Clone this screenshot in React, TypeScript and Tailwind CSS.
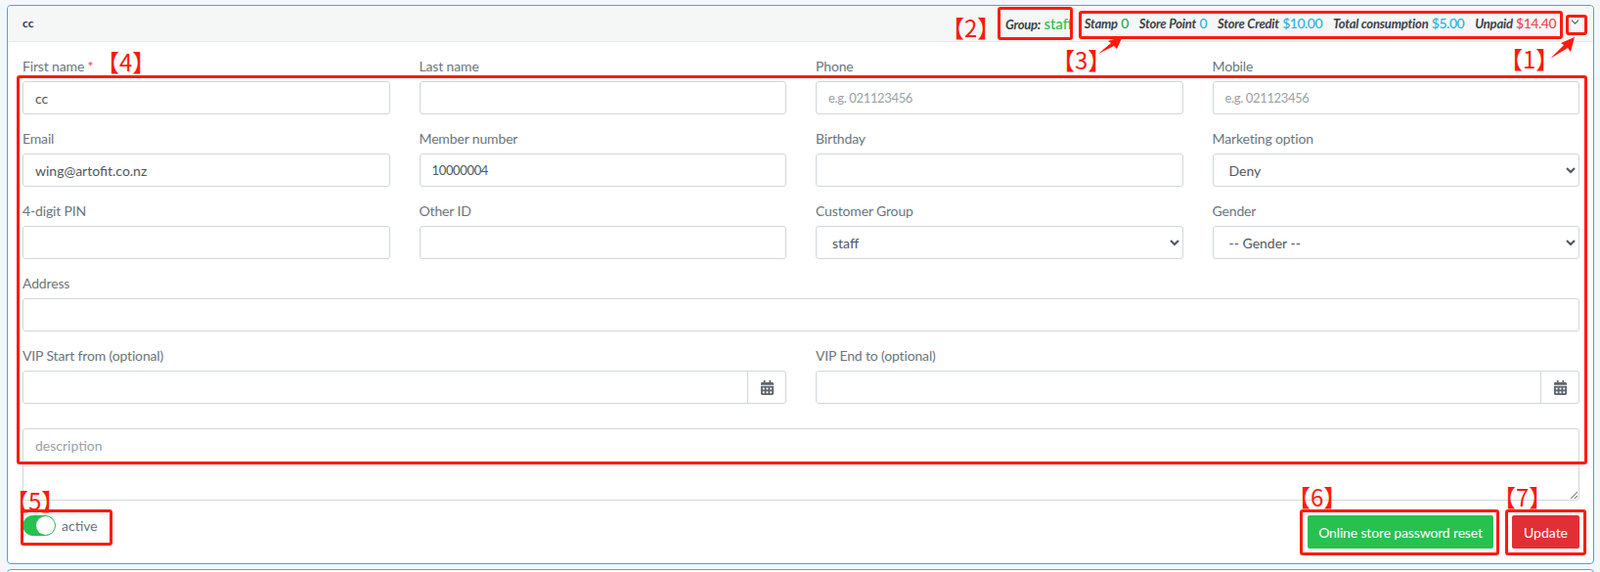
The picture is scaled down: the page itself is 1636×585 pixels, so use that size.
import React from "react";
import { FaCalendarAlt } from "react-icons/fa";
import { ChevronDown } from "lucide-react";

const labelClass = "block h-[21px] mb-[5px] text-[14px] tracking-[-0.15px] leading-[21px] text-[#6c757d]";
const inputClass =
  "block w-full h-[34px] px-3 bg-white border border-[#ced8db] rounded-[3px] text-[14px] text-[#50575e] placeholder:text-[#9aa1a7] outline-none";
const numberInputClass =
  "block w-full h-[34px] px-3 bg-white border border-[#ced8db] rounded-[3px] text-[13px] tracking-[-0.35px] text-[#50575e] placeholder:text-[#9aa1a7] outline-none";
const selectClass =
  "block w-full h-[34px] px-3 bg-white border border-[#ced8db] rounded-[3px] text-[14px] text-[#50575e] outline-none";

const Field: React.FC<{ label: string; required?: boolean; children: React.ReactNode }> = ({
  label,
  required,
  children,
}) => (
  <div className="mb-[14px]">
    <label className={labelClass}>
      {label}
      {required && <span className="text-[#f0454f]"> *</span>}
    </label>
    {children}
  </div>
);

const TextField: React.FC<{
  label: string;
  value?: string;
  placeholder?: string;
  required?: boolean;
  numeric?: boolean;
}> = ({ label, value, placeholder, required, numeric }) => (
  <Field label={label} required={required}>
    <input className={numeric ? numberInputClass : inputClass} defaultValue={value} placeholder={placeholder} />
  </Field>
);

const SelectField: React.FC<{ label: string; options: string[] }> = ({ label, options }) => (
  <Field label={label}>
    <select className={selectClass}>
      {options.map((o) => (
        <option key={o}>{o}</option>
      ))}
    </select>
  </Field>
);

const DateField: React.FC<{ label: string }> = ({ label }) => (
  <div className="mb-[25px]">
    <label className={labelClass}>{label}</label>
    <div className="flex h-[34px]">
      <input className="flex-1 min-w-0 h-full px-3 bg-white border border-[#ced8db] rounded-l-[3px] outline-none" />
      <span className="w-[40px] h-full -ml-px flex items-center justify-center bg-white border border-[#ced8db] rounded-r-[3px] text-[#5c6670] text-[15px]">
        <FaCalendarAlt />
      </span>
    </div>
  </div>
);

const Stat: React.FC<{ label: string; value: string; color: string }> = ({ label, value, color }) => (
  <span className="whitespace-nowrap text-[13px]">
    <b className="italic text-[13px] tracking-[-0.2px] text-[#3c4145]">{label}</b>{" "}
    <span className={`text-[14px] font-medium tracking-[-0.5px] ${color}`}>{value}</span>
  </span>
);

const Annotation: React.FC<{ className: string; children: string }> = ({ className, children }) => (
  <span
    className={`absolute text-[24px] leading-[24px] text-[#ff1a0d] whitespace-nowrap font-['Noto_Sans_CJK_SC',sans-serif] ${className}`}
  >
    {children}
  </span>
);

const boxClass = "absolute border-[3px] border-[#ff1a0d] rounded-[3px]";

export default function App() {
  return (
    <div className="relative h-[585px] overflow-hidden bg-[#f4f6f9] font-['Lato',sans-serif]">
      <div className="pt-[5px] ml-[7px] mr-[6px]">
        {/* Customer card */}
        <div className="bg-white border border-[#2bb4e4] rounded-[4px]">
          <div className="h-[37px] flex items-center justify-between pl-[15px] pr-[8px] bg-[#f5f7f7] border-b border-[#e6eaec] rounded-t-[4px]">
            <b className="text-[12px] text-[#343a40]">cc</b>
            <div className="flex items-center">
              <span className="mr-[12px] whitespace-nowrap text-[13px]">
                <b className="italic text-[13px] tracking-[-0.2px] text-[#3c4145]">Group:</b>{" "}
                <span className="text-[15px] font-medium text-[#28c04f]">staff</span>
              </span>
              <div className="flex items-center gap-[11px] mr-[9px]">
                <Stat label="Stamp" value="0" color="text-[#28a745]" />
                <Stat label="Store Point" value="0" color="text-[#2bb0e0]" />
                <Stat label="Store Credit" value="$10.00" color="text-[#2bb0e0]" />
                <Stat label="Total consumption" value="$5.00" color="text-[#2bb0e0]" />
                <Stat label="Unpaid" value="$14.40" color="text-[#f0454f]" />
              </div>
              <ChevronDown size={13} className="text-[#555b60] mb-[3px] mx-[4px]" />
            </div>
          </div>

          <div className="pt-[14px] pl-[15px] pr-[14px] pb-[15px]">
            <div className="grid grid-cols-4 gap-x-[30px]">
              <TextField label="First name" value="cc" required />
              <TextField label="Last name" />
              <TextField label="Phone" placeholder="e.g. 021123456" numeric />
              <TextField label="Mobile" placeholder="e.g. 021123456" numeric />
              <TextField label="Email" value="wing@artofit.co.nz" />
              <TextField label="Member number" value="10000004" numeric />
              <TextField label="Birthday" />
              <SelectField label="Marketing option" options={["Deny", "Allow"]} />
              <TextField label="4-digit PIN" />
              <TextField label="Other ID" />
              <SelectField label="Customer Group" options={["staff", "member"]} />
              <SelectField label="Gender" options={["-- Gender --", "Male", "Female"]} />
            </div>
            <TextField label="Address" />
            <div className="grid grid-cols-2 gap-x-[30px]">
              <DateField label="VIP Start from (optional)" />
              <DateField label="VIP End to (optional)" />
            </div>
            <textarea
              className="block w-full h-[74px] px-3 py-[6px] bg-white border border-[#ced8db] rounded-[3px] text-[14px] text-[#50575e] placeholder:text-[#9aa1a7] outline-none"
              placeholder="description"
            />
            <div className="mt-[15px] flex items-start justify-between">
              <div className="flex items-center gap-[6px] h-[21px]">
                <span className="relative w-[34px] h-[21px] rounded-full bg-[#28c04f] border border-[#28c04f]">
                  <span className="absolute right-0 top-0 w-[19px] h-[19px] rounded-full bg-white" />
                </span>
                <span className="text-[14px] text-[#6c757d]">active</span>
              </div>
              <div className="flex gap-[19px]">
                <button className="h-[34px] w-[190px] bg-[#28c04f] rounded-[2px] text-[14px] tracking-[-0.15px] text-white">
                  Online store password reset
                </button>
                <button className="h-[34px] w-[69px] bg-[#e12f36] rounded-[2px] text-[14px] text-white">
                  Update
                </button>
              </div>
            </div>
          </div>
        </div>
        {/* Next card, cut off by the window */}
        <div className="mt-[5px] h-[30px] bg-white border border-[#2bb4e4] rounded-[4px]" />
      </div>

      {/* Red annotations drawn over the page */}
      <div className={`${boxClass} left-[1020px] top-[7px] w-[77px] h-[34px]`} />
      <div className={`${boxClass} left-[1103px] top-[11px] w-[495px] h-[29px]`} />
      <div className={`${boxClass} left-[1601px] top-[15px] w-[22px] h-[21px]`} />
      <div className={`${boxClass} left-[17px] top-[77px] w-[1606px] h-[398px]`} />
      <div className={`${boxClass} left-[21px] top-[521px] w-[94px] h-[37px]`} />
      <div className={`${boxClass} left-[1329px] top-[521px] w-[204px] h-[47px]`} />
      <div className={`${boxClass} left-[1539px] top-[521px] w-[83px] h-[47px]`} />

      <Annotation className="left-[962px] top-[16px]">【2】</Annotation>
      <Annotation className="left-[1075px] top-[49px]">【3】</Annotation>
      <Annotation className="left-[1533px] top-[48px]">【1】</Annotation>
      <Annotation className="left-[98px] top-[51px]">【4】</Annotation>
      <Annotation className="left-[5px] top-[500px]">【5】</Annotation>
      <Annotation className="left-[1316px] top-[496px]">【6】</Annotation>
      <Annotation className="left-[1526px] top-[496px]">【7】</Annotation>

      {/* Arrows */}
      <svg className="absolute left-0 top-0 pointer-events-none" width="1636" height="585">
        <polygon points="1123,55 1136,44 1133,42 1148,37 1142,50 1139,47" fill="#ff1a0d" />
        <polygon points="1585,60 1599,46 1596,44 1610,38 1606,53 1603,49" fill="#ff1a0d" />
      </svg>
    </div>
  );
}
